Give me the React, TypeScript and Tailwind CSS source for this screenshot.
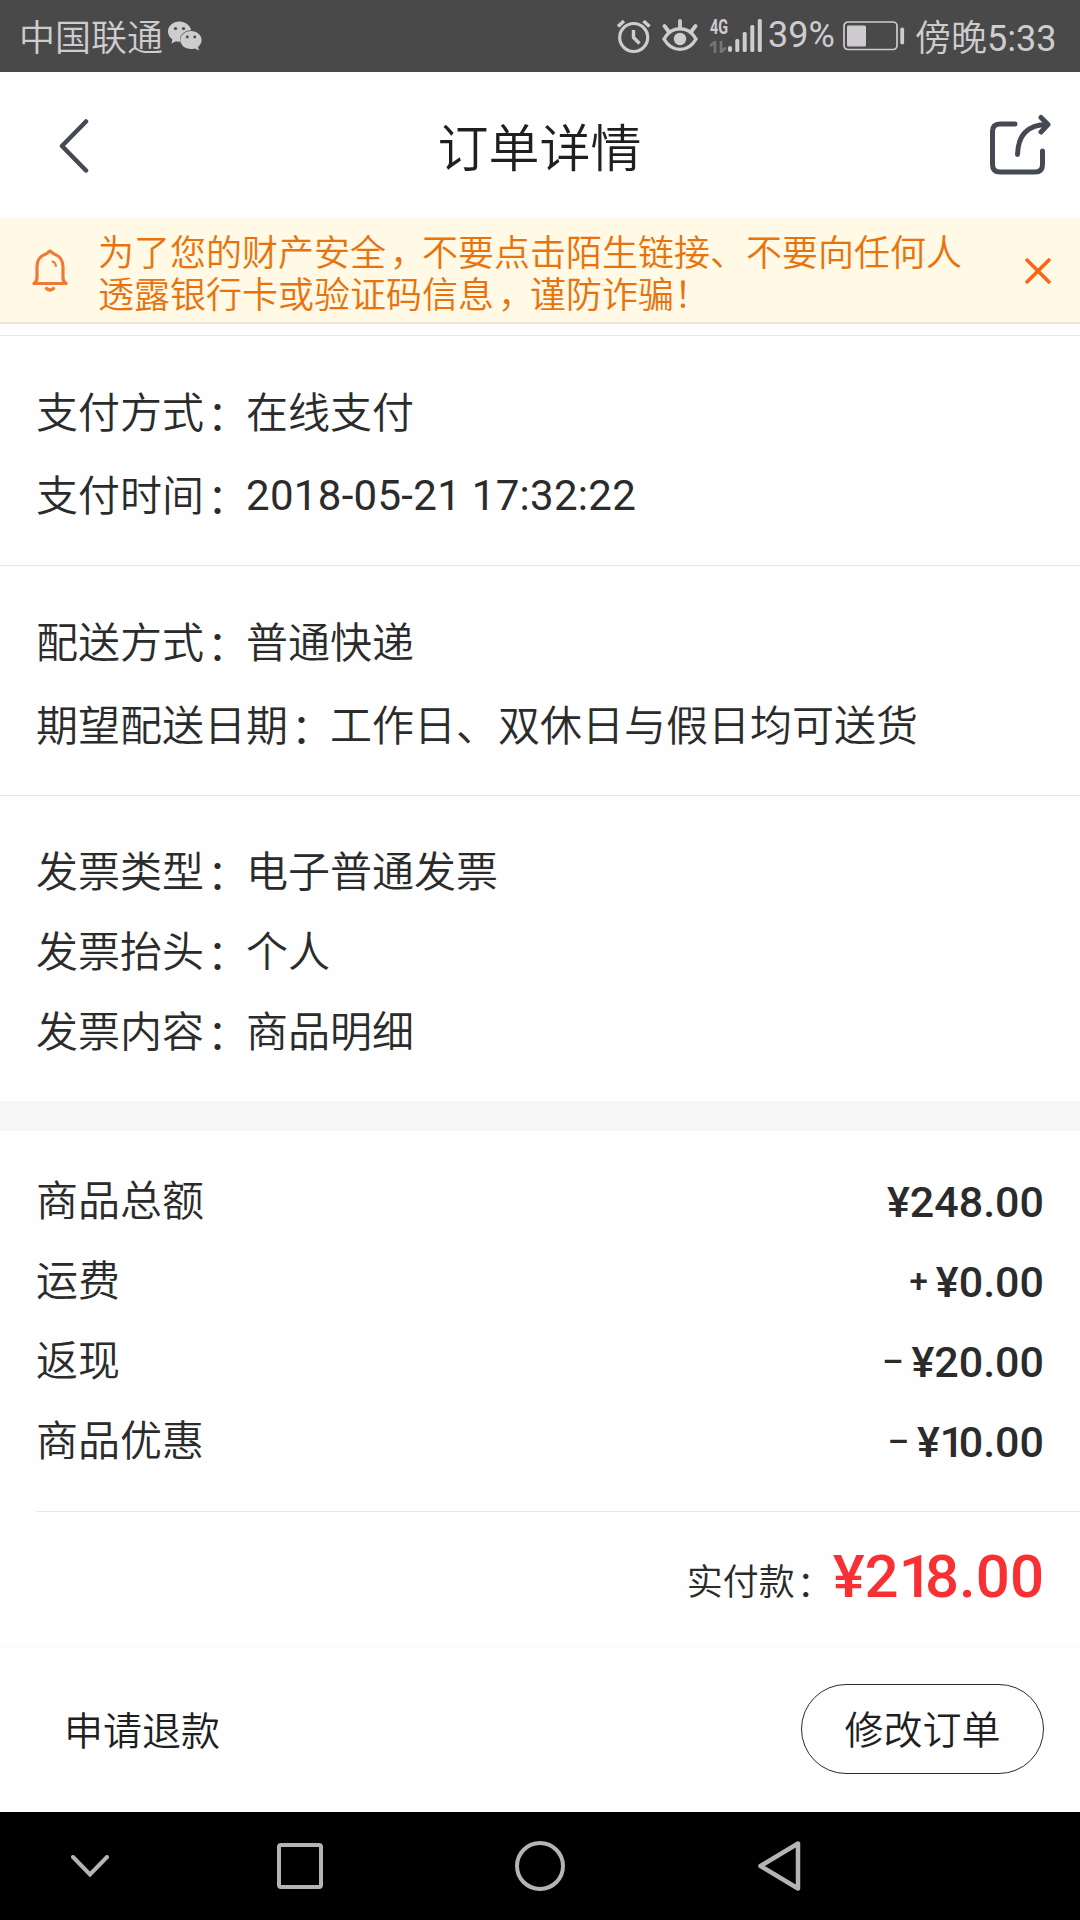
import React from 'react';

const payment = [
  { label: '支付方式', value: '在线支付' },
  { label: '支付时间', value: '2018-05-21 17:32:22' },
];

const delivery = [
  { label: '配送方式', value: '普通快递' },
  { label: '期望配送日期', value: '工作日、双休日与假日均可送货' },
];

const invoice = [
  { label: '发票类型', value: '电子普通发票' },
  { label: '发票抬头', value: '个人' },
  { label: '发票内容', value: '商品明细' },
];

const amounts = [
  { label: '商品总额', sign: '', value: '¥248.00' },
  { label: '运费', sign: '+', value: '¥0.00' },
  { label: '返现', sign: '–', value: '¥20.00' },
  { label: '商品优惠', sign: '–', value: '¥10.00' },
];

const StatusBar = () => (
  <div className="flex h-[72px] items-center bg-[#494949] pl-[19px] text-[36px] leading-[72px] text-[#cfcccf]">
    <p className="mt-1.5 w-[148px] whitespace-nowrap">中国联通</p>
    <svg className="ml-px shrink-0" width="34" height="30" viewBox="0 0 34 30">
      <path fill="#cfcccf" d="M11.500 0.500C5 0.500 0 5 0 10.500c0 3.200 1.700 6 4.500 7.900L3.400 22.500l4.600-2.300c1.300.4 2.600.5 4.200.5C10.800 14.500 16 9.300 23.300 9.300 22 4 17.200.5 11.500.500z" />
      <path fill="#cfcccf" d="M23 10c-6 0-10.700 4-10.700 9s4.700 9 10.700 9c1.400 0 2.700-.2 3.900-.6l4.200 2-1.100-3.500c2.300-1.700 3.600-4.100 3.600-6.900 0-5-4.700-9-10.600-9z" />
      <g fill="#494949">
        <circle cx="7.500" cy="7.500" r="1.600" />
        <circle cx="15.500" cy="7.500" r="1.600" />
        <circle cx="19.300" cy="16" r="1.400" />
        <circle cx="26.800" cy="16" r="1.400" />
      </g>
    </svg>
    <div className="flex-1" />
    <svg className="shrink-0" width="34" height="36" viewBox="0 0 34 36" fill="none" stroke="#cfcccf">
      <circle cx="16.700" cy="19.500" r="14" strokeWidth="3.200" />
      <path d="M16.500 12v7.500l6 6" strokeWidth="3.400" />
      <path d="M1 8.500l6-5.500M32.500 8.500l-6-5.500" strokeWidth="3.600" />
    </svg>
    <svg className="ml-[11px] shrink-0" width="36" height="34" viewBox="0 0 36 34" fill="none" stroke="#cfcccf">
      <path d="M2 20C6 13 11.500 9.800 18 9.800S30 13 34 20c-4 7-9.500 10.400-16 10.400S6 27 2 20z" strokeWidth="3.400" />
      <circle cx="18" cy="20" r="6.200" fill="#cfcccf" stroke="none" />
      <path d="M18 9V2M7 13L2.500 7M29 13l4.500-6" strokeWidth="3.800" strokeLinecap="round" />
    </svg>
    <div className="ml-3 flex h-[34px] w-[19px] shrink-0 flex-col justify-between">
      <p className="origin-left scale-x-[0.72] text-[20px] leading-4 font-bold">4G</p>
      <svg width="18" height="12" viewBox="0 0 18 12" fill="none" stroke="#777577" strokeWidth="2.600">
        <path d="M0 5l5-4v11M11 0v11l5-4.500" />
      </svg>
    </div>
    <svg className="-ml-px shrink-0" width="34" height="34" viewBox="0 0 34 34" fill="#cfcccf">
      <rect x="0" y="27" width="4" height="6" rx="2" />
      <rect x="7.300" y="20" width="4" height="13" rx="1.500" />
      <rect x="14.700" y="13" width="4" height="20" rx="1.500" />
      <rect x="22.300" y="6" width="4" height="27" rx="1.500" />
      <rect x="29.800" y="0" width="4" height="33" rx="1.500" />
    </svg>
    <p className="-mt-0.5 ml-1.5 w-[66px] font-normal whitespace-nowrap">39%</p>
    <svg className="ml-[9px] shrink-0" width="62" height="30" viewBox="0 0 62 30">
      <rect x="1" y="1" width="53" height="27.500" rx="4" fill="none" stroke="#cfcccf" strokeWidth="1.700" />
      <rect x="4" y="4.500" width="19" height="21" rx="1.500" fill="#cfcccf" />
      <rect x="57.300" y="6.500" width="3.800" height="17" rx="1.800" fill="#cfcccf" />
    </svg>
    <p className="mt-1.5 ml-2.5 w-[165px] whitespace-nowrap">傍晚<span className="font-normal">5:33</span></p>
  </div>
);

const Header = () => (
  <div className="flex h-[146px] items-center justify-between pt-0.5 pr-7 pl-[59px]">
    <svg width="30" height="56" viewBox="0 0 30 56" fill="none" stroke="#454953" strokeWidth="4.500" strokeLinecap="round" strokeLinejoin="round">
      <path d="M27 3.500L3 28l24 24.500" />
    </svg>
    <h1 className="mt-2 text-[51px] leading-[60px] text-[#1f1f1f]">订单详情</h1>
    <svg className="mb-1" width="62" height="62" viewBox="0 0 62 62" fill="none" stroke="#454953" strokeWidth="5" strokeLinecap="round" strokeLinejoin="round">
      <path d="M25 11H10q-7.500 0-7.500 7.500v33Q2.500 59 10 59h35q7.500 0 7.500-7.500V38" />
      <path d="M27.500 41.500C28 23 37 11.500 57 11.500M51 4.500l7 7-7 7.500" />
    </svg>
  </div>
);

const Comma = () => <span className="pl-1 tracking-[-4px]">，</span>;

const Notice = () => (
  <div className="flex h-[106px] items-center border-b-2 border-[#e9e5d6] bg-[#fff9e6] pt-px">
    <svg className="ml-8 shrink-0" width="36" height="43" viewBox="0 0 36 43" fill="none" stroke="#f07a35" strokeWidth="3.200" strokeLinecap="round" strokeLinejoin="round">
      <path d="M2 34.500q3-1.500 3-6V18c0-7 4-11.500 9-13l4-3 4 3c5 1.500 9 6 9 13v10.500q0 4.500 3 6z" />
      <path d="M14.500 39.500q3.500 3 7 0" />
      <path d="M20.500 12.500q3 1 3.500 4.500" strokeWidth="2" />
    </svg>
    <p className="mt-[9px] ml-[30px] w-[880px] text-[36px] leading-[42px] text-[#e8730c]">
      为了您的财产安全<Comma />不要点击陌生链接、不要向任何人
      <br />
      透露银行卡或验证码信息<Comma />谨防诈骗！
    </p>
    <svg className="ml-[47px] shrink-0" width="26" height="26" viewBox="0 0 26 26" fill="none" stroke="#fb6410" strokeWidth="3.500">
      <path d="M1 1l24 24M25 1L1 25" />
    </svg>
  </div>
);

const InfoRow = ({ label, value, className }: { label: string; value: string; className: string }) => (
  <div className={`flex items-center ${className}`}>
    <p>{label}</p>
    <p className="mt-1.5 w-[42px] pl-[3px] tracking-[-3px]">：</p>
    {/* dates are set a touch heavier and wider than the Chinese text */}
    <p className={/^\d/.test(value) ? 'mb-0.5 font-normal tracking-[0.3px]' : ''}>{value}</p>
  </div>
);

// the figure 1 sits tighter than the other digits
const Price = ({ value }: { value: string }) => (
  <span>
    {value.split('').map((char, i) => (
      <span key={i} className={char === '1' ? 'tracking-[-0.13em]' : ''}>{char}</span>
    ))}
  </span>
);

const NavBar = () => (
  <div className="flex h-[108px] items-center bg-black">
    <svg className="ml-[71px]" width="38" height="22" viewBox="0 0 38 22" fill="none" stroke="#b4b4b4" strokeWidth="4" strokeLinecap="round">
      <path d="M2 2l17 17.500L36 2" />
    </svg>
    <div className="ml-[168px] h-[46px] w-[46px] rounded border-[4.500px] border-[#b4b4b4]" />
    <div className="ml-[192px] h-[50px] w-[50px] rounded-full border-[4.500px] border-[#b4b4b4]" />
    <svg className="ml-[193px]" width="43" height="50" viewBox="0 0 43 50" fill="none" stroke="#b4b4b4" strokeWidth="4.500" strokeLinejoin="round">
      <path d="M40 2.500v45L2.500 25z" />
    </svg>
  </div>
);

const App = () => {
  return (
    <div className="flex h-[1920px] w-[1080px] flex-col overflow-hidden bg-[#fefefe] font-['Roboto','Noto_Sans_CJK_SC',sans-serif] font-[350] text-[#2b2b2b]">
      <StatusBar />
      <Header />
      <Notice />
      <div className="h-3 border-b border-[#e6e6e6]" />

      <div className="border-b border-[#e6e6e6] px-9 pt-9 pb-[27px] text-[42px]">
        {payment.map((row) => <InfoRow key={row.label} {...row} className="h-[83px]" />)}
      </div>
      <div className="border-b border-[#e6e6e6] px-9 pt-9 pb-[27px] text-[42px]">
        {delivery.map((row) => <InfoRow key={row.label} {...row} className="h-[83px]" />)}
      </div>
      <div className="px-9 pt-9 pb-[29px] text-[42px]">
        {invoice.map((row) => <InfoRow key={row.label} {...row} className="h-20" />)}
      </div>
      <div className="h-[30px] bg-[#f6f6f6]" />

      <div className="px-9 pt-[30px] pb-[30px] text-[42px]">
        {amounts.map((row) => (
          <div key={row.label} className="flex h-20 items-center justify-between">
            <p>{row.label}</p>
            <p className="flex items-center gap-2 pt-0.5 text-[43px] font-medium">
              {row.sign && <span className="text-[33px]">{row.sign}</span>}
              <Price value={row.value} />
            </p>
          </div>
        ))}
      </div>
      <div className="ml-9 h-px bg-[#e6e6e6]" />
      <div className="flex h-[134px] items-center justify-end pr-9 pb-1">
        <p className="mt-3 text-[36px]">实付款</p>
        <p className="mt-4 w-[38px] pl-0.5 text-[36px]">：</p>
        <p className="text-[60px] font-medium text-[#f83033]"><Price value="¥218.00" /></p>
      </div>

      <div className="flex h-[166px] items-center justify-between border-t border-[#f9f9f9] pr-9 pb-0.5 pl-16 text-[39px] text-[#1f1f1f]">
        <p className="mt-2">申请退款</p>
        <button className="h-[90px] w-[243px] rounded-full border border-[#2b2b2b] pt-1.5">修改订单</button>
      </div>
      <NavBar />
    </div>
  );
};

export default App;
